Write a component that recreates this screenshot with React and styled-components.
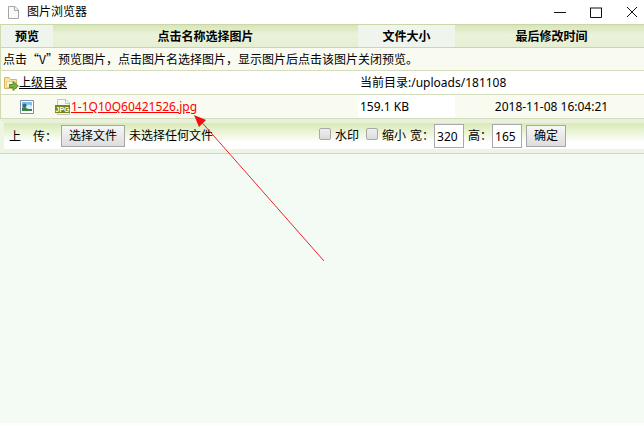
import React, { useRef, useState } from 'react';
import styled, { createGlobalStyle } from 'styled-components';

const GlobalStyle = createGlobalStyle`
  body {
    margin: 0;
    background-color: #f4fbf4;
    color: #000000;
    font-family: 'Noto Sans', 'Noto Sans CJK SC', sans-serif;
    font-size: 12px;
    line-height: 18px;
    overflow: hidden;
  }
`

//styled components
const Browser = styled.div`
  position: relative;
  box-sizing: border-box;
  display: flex;
  flex-direction: column;
  min-height: 100vh;
  border-bottom: solid 3px #fcfefb;
`

const TitleBar = styled.header`
  display: flex;
  align-items: center;
  height: 24px;
  padding: 0 6px;
  background-color: #ffffff;
`

const Title = styled.h1`
  flex: 1;
  margin: 0 0 0 7px;
  font-size: 12px;
  font-weight: normal;
`

const WindowButtons = styled.div`
  display: flex;
  gap: 24px;
`

const WindowButton = styled.button`
  display: flex;
  padding: 0;
  border: none;
  background: none;
`

const FileTable = styled.table`
  width: 100%;
  table-layout: fixed;
  border-spacing: 0;
  border-left: solid 1px #cfdbb2;
`

const HeadCell = styled.th`
  box-sizing: border-box;
  width: ${props => props.$width || 'auto'};
  height: 24px;
  padding: 1px 0 0 ${props => (props.$last ? '4px' : '0')};
  border-top: solid 1px #c9d8a8;
  border-bottom: solid 1px #cbd6b0;
  background: ${props => (props.$plain ? '#eff5ec' : 'linear-gradient(#d8e6b6, #eaf2da 45%, #e6efd3)')};
`

const Cell = styled.td`
  box-sizing: border-box;
  height: ${props => props.$height || '24px'};
  padding: 0 0 0 ${props => props.$indent || '2px'};
  border-bottom: solid 1px #d3ddbc;
  background-color: ${props => (props.$tinted ? '#f9fbf0' : '#ffffff')};
  text-align: ${props => props.$align || 'left'};
  white-space: nowrap;
`

const Chinese = styled.span`
  font-family: 'Noto Sans CJK SC', sans-serif;
`

const FileLink = styled.a`
  display: inline-flex;
  align-items: center;
  color: ${props => (props.$active ? '#ff0000' : '#000000')};
  text-decoration: underline;
  vertical-align: middle;
`

const PreviewButton = styled.button`
  display: inline-flex;
  padding: 0;
  border: none;
  background: none;
  vertical-align: middle;
`

const UploadForm = styled.form`
  display: flex;
  align-items: center;
  height: 26px;
  padding: 0 5px;
  margin: 0;
  border: solid 4px #e9f1dc;
  border-left-color: #eef5e4;
  border-right: none;
  border-bottom-color: #edf4e4;
  background: linear-gradient(#d8eab5, #ffffff 75%);
  box-shadow: 0 1px #cbdcb4;
  white-space: nowrap;
`

const FileField = styled.div`
  display: flex;
  align-items: center;
  gap: 4px;
  width: 310px;
`

const Button = styled.button`
  box-sizing: border-box;
  height: 22px;
  padding: 0 7px;
  border: solid 1px #a6a6a6;
  background: linear-gradient(#f6f6f6, #dddddd);
  color: #000000;
  font: inherit;
`

const SizeOptions = styled.div`
  display: flex;
  align-items: center;
  gap: 4px;
`

const CheckLabel = styled.label`
  display: flex;
  align-items: center;
  gap: 4px;
`

const Checkbox = styled.input`
  appearance: none;
  box-sizing: border-box;
  width: 12px;
  height: 12px;
  margin: 0 0 4px;
  border: solid 1px #a8a8a8;
  border-radius: 2px;
  background: linear-gradient(#eeeeee, #dcdcdc);
  &:checked {
    background: #666666;
  }
`

const CheckGroup = styled.div`
  display: flex;
  gap: 7px;
`

const SizeLabel = styled.label`
  display: flex;
  align-items: center;
`

const SizeInput = styled.input`
  box-sizing: border-box;
  width: 30px;
  height: 24px;
  padding: 1px 2px;
  border: solid 1px #a9a9a9;
  background-color: #ffffff;
  color: #000000;
  font: inherit;
`

const Arrow = styled.svg`
  position: absolute;
  left: 190px;
  top: 110px;
  pointer-events: none;
`

const PageIcon = () => (
  <svg width="14" height="14" viewBox="0 0 14 14" fill="none" aria-hidden="true">
    <path d="M2.5 1.5H9L12.5 5V13.5H2.5Z" fill="#fafafa" stroke="#a5a5a5" />
    <path d="M8.5 1.5V5.5H12.5" stroke="#a5a5a5" />
  </svg>
)

const FolderIcon = () => (
  <svg width="16" height="16" viewBox="0 0 16 16" aria-hidden="true">
    <path d="M1.5 13.5V2.5H6L7.5 4.5H13.5V13.5Z" fill="#f5e6a6" stroke="#d9b263" />
    <path d="M3.5 12.5V6.5H12.5V12.5Z" fill="#fdf6cd" stroke="#e8cd85" />
    <path d="M6.5 9.5H10V6.5L15.3 11L10 15.5V12.5H6.5Z" fill="#72b63d" stroke="#4f8f33" />
  </svg>
)

const PictureIcon = () => (
  <svg width="14" height="14" viewBox="0 0 14 14" aria-hidden="true">
    <path d="M0.5 0.5H13.5V13.5H0.5Z" fill="#ffffff" stroke="#7b90a6" />
    <path d="M2 2H12V11H2Z" fill="#7fbdf0" />
    <path d="M6 6C8 4 10 5 12 6V9H6Z" fill="#d7effb" />
    <path d="M2 8L5 7L8 9H12V11H2Z" fill="#3f7f4c" />
    <circle cx="4.5" cy="5.5" r="2" fill="#39724d" />
  </svg>
)

const JpgIcon = () => (
  <svg width="16" height="16" viewBox="0 0 16 16" aria-hidden="true">
    <path d="M2.5 0.5H11L14.5 4V15.5H2.5Z" fill="#f8f8f4" stroke="#c4c5bc" />
    <path d="M10.5 0.5V4.5H14.5" fill="none" stroke="#c4c5bc" />
    <path d="M0 6H15V14H0Z" fill="#7b8414" />
    <text x="7.5" y="12.5" textAnchor="middle" fill="#ffffff" fontFamily="Liberation Sans" fontSize="7" fontWeight="bold">JPG</text>
  </svg>
)

const windowButtons = [
  { label: '最小化', path: 'M0 6.5H12' },
  { label: '最大化', path: 'M0.5 2V11.5H11.5V2M0 2H12' },
  { label: '关闭', path: 'M1 1L11 11M11 1L1 11' },
]

const App = () => {
  const fileRef = useRef(null)
  const [fileName, setFileName] = useState('未选择任何文件')
  return (
    <>
      <GlobalStyle />
      <Browser lang="zh-CN">
        <TitleBar>
          <PageIcon />
          <Title>图片浏览器</Title>
          <WindowButtons>
            {windowButtons.map(({ label, path }) => (
              <WindowButton key={label} type="button" aria-label={label}>
                <svg width="12" height="12" viewBox="0 0 12 12" fill="none" stroke="#111111">
                  <path d={path} />
                </svg>
              </WindowButton>
            ))}
          </WindowButtons>
        </TitleBar>
        <FileTable>
          <thead>
            <tr>
              <HeadCell $width="52px" $plain>预览</HeadCell>
              <HeadCell>点击名称选择图片</HeadCell>
              <HeadCell $width="97px" $plain>文件大小</HeadCell>
              <HeadCell $width="189px" $last>最后修改时间</HeadCell>
            </tr>
          </thead>
          <tbody>
            <tr>
              <Cell colSpan="4" $height="23px" $tinted>
                <Chinese>点击“V”预览图片，点击图片名选择图片，显示图片后点击该图片关闭预览。</Chinese>
              </Cell>
            </tr>
            <tr>
              <Cell colSpan="2">
                <FileLink href="#parent"><FolderIcon />上级目录</FileLink>
              </Cell>
              <Cell colSpan="2">当前目录:/uploads/181108</Cell>
            </tr>
            <tr>
              <Cell $align="center" $indent="0" $tinted>
                <PreviewButton type="button" aria-label="预览"><PictureIcon /></PreviewButton>
              </Cell>
              <Cell $tinted>
                <FileLink href="#image" $active><JpgIcon />1-1Q10Q60421526.jpg</FileLink>
              </Cell>
              <Cell>159.1 KB</Cell>
              <Cell $align="center" $indent="4px" $tinted>2018-11-08 16:04:21</Cell>
            </tr>
          </tbody>
        </FileTable>
        <UploadForm onSubmit={(e) => e.preventDefault()}>
          <FileField>
            <Chinese as="label" htmlFor="upload">上　传：</Chinese>
            <input id="upload" ref={fileRef} type="file" hidden onChange={(e) => {
              const file = e.target.files[0]
              setFileName(file ? file.name : '未选择任何文件')
            }} />
            <Button type="button" onClick={() => fileRef.current.click()}>选择文件</Button>
            <span>{fileName}</span>
          </FileField>
          <SizeOptions>
            <CheckGroup>
              <CheckLabel><Checkbox type="checkbox" name="watermark" />水印</CheckLabel>
              <CheckLabel><Checkbox type="checkbox" name="resize" />缩小</CheckLabel>
            </CheckGroup>
            <SizeLabel>宽：<SizeInput name="width" defaultValue="320" /></SizeLabel>
            <SizeLabel>高：<SizeInput name="height" defaultValue="165" /></SizeLabel>
            <Button type="submit">确定</Button>
          </SizeOptions>
        </UploadForm>
        <Arrow width="140" height="156" viewBox="0 0 140 156" aria-hidden="true">
          <path d="M8 8L134 151" stroke="#e8262b" strokeWidth="1" />
          <path d="M4 5L16 10L9 17Z" fill="#f01010" />
        </Arrow>
      </Browser>
    </>
  )
}

export default App;
